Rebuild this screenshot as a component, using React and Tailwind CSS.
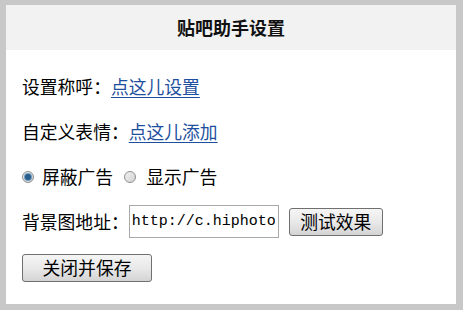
import React, { useState } from "react";

const font = { fontFamily: '"Noto Sans CJK SC", "Noto Sans", sans-serif' };

const Radio = ({ checked, onClick }) => (
  <span
    onClick={onClick}
    className="w-[12px] h-[12px] rounded-full border border-[#8e8f8f] bg-gradient-to-br from-[#f0f0f0] to-[#d2d2d2] flex items-center justify-center shrink-0 cursor-pointer"
  >
    {checked && (
      <span className="w-[6px] h-[6px] rounded-full bg-[#2a5d8a] ring-1 ring-[#6f9cc4]" />
    )}
  </span>
);

const Button = ({ children, className }) => (
  <button
    className={
      "h-[28px] border border-[#707070] rounded-[3px] bg-gradient-to-b from-[#f5f5f5] via-[#e9e9e9] to-[#d4d4d4] text-black text-[17.8px] leading-none flex items-center justify-center " +
      className
    }
  >
    {children}
  </button>
);

const App = () => {
  const [hideAds, setHideAds] = useState(true);

  return (
    <div className="w-[463px] h-[310px] bg-[#c8c8c8] pt-[5px] pl-[6px] pr-[7px] pb-[6px]" style={font}>
      <div className="h-full bg-white flex flex-col">
        <div className="h-[45px] bg-[#f2f2f2] flex items-center justify-center text-[18px] font-bold text-[#111]">
          贴吧助手设置
        </div>

        <div className="pt-[14px] pl-[16px] text-[17.8px] text-black leading-none">
          <div className="h-[45px] flex items-center">
            <span>设置称呼：</span>
            <a href="#" className="text-[#1e4f9e] underline underline-offset-[3px]">点这儿设置</a>
          </div>

          <div className="h-[45px] flex items-center">
            <span>自定义表情：</span>
            <a href="#" className="text-[#1e4f9e] underline underline-offset-[3px]">点这儿添加</a>
          </div>

          <div className="h-[45px] flex items-center">
            <Radio checked={hideAds} onClick={() => setHideAds(true)} />
            <span className="ml-[8px]">屏蔽广告</span>
            <span className="ml-[11px]">
              <Radio checked={!hideAds} onClick={() => setHideAds(false)} />
            </span>
            <span className="ml-[10px]">显示广告</span>
          </div>

          <div className="h-[45px] flex items-center">
            <span>背景图地址：</span>
            <input
              className="w-[150px] h-[33px] border border-[#a9a9a9] pl-[2px] pr-[3px] text-[15px] text-black outline-none"
              style={{ fontFamily: '"Liberation Mono", monospace' }}
              defaultValue="http://c.hiphotos.baidu.com/bg.jpg"
            />
            <Button className="ml-[10px] w-[94px]">测试效果</Button>
          </div>

          <div className="h-[45px] flex items-center mt-[1px]">
            <Button className="w-[130px]">关闭并保存</Button>
          </div>
        </div>
      </div>
    </div>
  );
};

export default App;
